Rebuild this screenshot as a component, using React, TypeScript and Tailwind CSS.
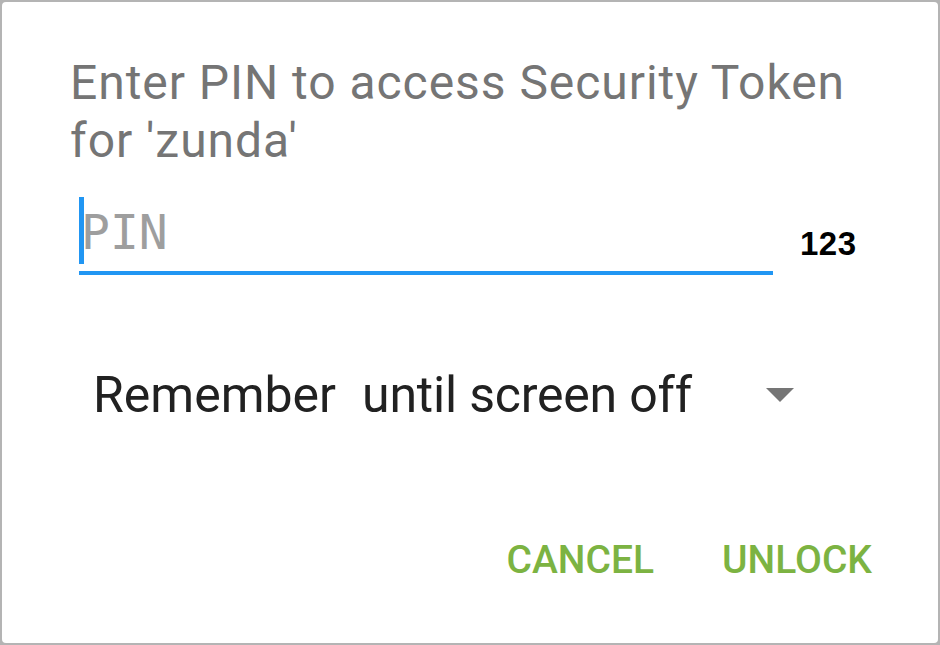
import React from "react";

export default function App() {
  return (
    <div className="w-[940px] h-[645px] bg-[#b4b4b4] p-[2px]" style={{ fontFamily: "Roboto, 'Noto Sans', sans-serif" }}>
      <div className="w-full h-full bg-white rounded-[4px] flex flex-col">
        <div className="pt-[52px] pl-[68px] pr-[56px] text-[48px] leading-[58px] tracking-[0.95px] text-[#757575]">
          Enter PIN to access Security Token for 'zunda'
        </div>
        <div className="flex items-end mt-[19px] pl-[77px]">
          <div className="relative w-[694px] h-[86px] border-b-4 border-[#2196f3] flex items-end pb-[11px]">
            <div className="absolute left-0 top-[8px] w-[5px] h-[67px] bg-[#2196f3]" />
            <span className="pl-[2px] text-[48px] leading-[56px] text-[#9e9e9e]" style={{ fontFamily: "'DejaVu Sans Mono', monospace" }}>
              PIN
            </span>
          </div>
          <div className="ml-[27px] mb-[11px] text-[33px] leading-[40px] font-bold text-black tracking-[0.5px]" style={{ fontFamily: "'Liberation Sans', sans-serif" }}>
            123
          </div>
        </div>
        <div className="flex items-center mt-[92px] pl-[91px] h-[56px]">
          <span className="text-[50px] leading-[56px] text-[#212121]">Remember</span>
          <span className="ml-[26px] text-[50px] leading-[56px] text-[#212121] tracking-[-0.2px]">until screen off</span>
          <svg className="ml-[74px]" width="28" height="14" viewBox="0 0 28 14">
            <polygon points="0,0 28,0 14,14" fill="#757575" />
          </svg>
        </div>
        <div className="flex justify-end items-center mt-[113px] pr-[66px] gap-[68px] text-[39px] leading-[48px] font-medium text-[#7cb342]">
          <span>CANCEL</span>
          <span>UNLOCK</span>
        </div>
      </div>
    </div>
  );
}
